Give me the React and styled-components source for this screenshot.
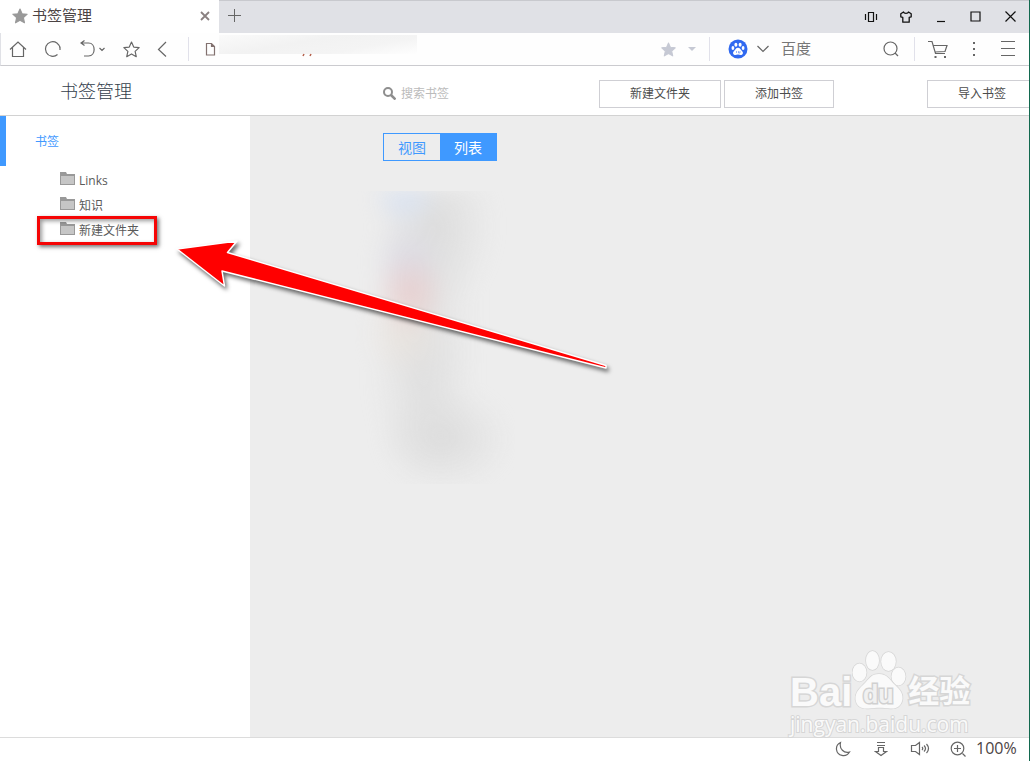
import React from 'react';
import styled, { createGlobalStyle, css } from 'styled-components';

const GlobalStyle = createGlobalStyle`
    * {
        box-sizing: border-box;
    }
    body {
        margin: 0;
        font-family: 'Open Sans', 'Noto Sans CJK SC', sans-serif;
        font-size: 12px;
        color: #555;
        background: #fff;
    }
    button, input {
        font-family: inherit;
        font-size: inherit;
        color: inherit;
    }
    svg {
        display: block;
        flex: none;
    }
`;

const Browser = styled.div`
    display: flex;
    flex-direction: column;
    height: 100vh;
    overflow: hidden;
    position: relative;
    border-right: 1px solid #12694f;
`;

const TabBar = styled.div`
    display: flex;
    height: 33px;
    flex: none;
    background: #e0e1e6;
    box-shadow: inset 0 1px #c8c9ce;
`;

const Tab = styled.div`
    display: flex;
    align-items: center;
    width: 219px;
    padding: 0 6px 2px 12px;
    gap: 5px;
    background: #fff;
    color: #4c4444;
    font-size: 15px;
`;

const TabTitle = styled.span`
    flex: 1;
    padding-bottom: 2px;
`;

const IconButton = styled.button`
    display: flex;
    align-items: center;
    justify-content: center;
    flex: none;
    width: ${props => props.$width || 35}px;
    height: 100%;
    padding: 0;
    border: 0;
    background: none;
    color: ${props => props.$color || '#666'};
`;

const WindowControls = styled.div`
    display: flex;
    margin-left: auto;
    padding-right: 1px;
`;

const NavBar = styled.div`
    display: flex;
    align-items: center;
    flex: none;
    height: 33px;
    background: #fefefe;
    border-bottom: 1px solid #cbcbcf;
    border-left: 1px solid #e0e1e6;
`;

const Divider = styled.span`
    width: 1px;
    height: 24px;
    flex: none;
    background: #e1e1ea;
    margin-left: ${props => props.$left || 0}px;
    margin-right: ${props => props.$right || 0}px;
`;

const Address = styled.label`
    display: flex;
    flex: 1;
    align-items: center;
    height: 100%;
    min-width: 0;
    padding-left: 11px;
    color: #82716f;
    position: relative;
`;

const AddressInput = styled.input`
    flex: 1;
    min-width: 0;
    border: 0;
    outline: 0;
    background: none;
`;

const AddressMask = styled.div`
    position: absolute;
    left: 30px;
    top: 2px;
    width: 198px;
    height: 19px;
    background: linear-gradient(170deg, #fafafa, #f2f2f2 40%, #f4f4f4 70%, #fefefe);
`;

const AddressRest = styled.svg`
    position: absolute;
    left: 112px;
    top: 20px;
`;

const Engine = styled.label`
    display: flex;
    align-items: center;
    width: 98px;
    margin-left: 10px;
    padding-bottom: 2px;
`;

const EngineInput = styled.input`
    width: 100%;
    padding: 0;
    border: 0;
    outline: 0;
    background: none;
    font-size: 15px;

    &::placeholder {
        color: #777;
        opacity: 1;
    }
`;

const Header = styled.header`
    display: flex;
    align-items: center;
    flex: none;
    height: 50px;
    padding: 6px 0 0 60px;
    background: #fff;
    border-bottom: 1px solid #d2d2d2;
`;

const Title = styled.h1`
    width: 323px;
    flex: none;
    margin: 0;
    padding-bottom: 6px;
    font-size: 18px;
    line-height: 24px;
    font-weight: 300;
    color: #34404c;
`;

const Search = styled.label`
    display: flex;
    align-items: center;
    flex: none;
    gap: 5px;
    width: 216px;
`;

const SearchInput = styled.input`
    width: 160px;
    padding: 0;
    border: 0;
    outline: 0;
    background: none;
    line-height: 18px;

    &::placeholder {
        color: #bbb;
        opacity: 1;
    }
`;

const HeaderButton = styled.button`
    flex: none;
    width: ${props => props.$width || 110}px;
    height: 28px;
    margin-right: 3px;
    padding: 0 0 2px;
    border: 1px solid #cfcfd4;
    background: #fff;
    color: #4c4c4c;

    &:last-child {
        margin-left: auto;
        margin-right: -8px;
    }
`;

const Main = styled.div`
    display: flex;
    flex: 1;
    min-height: 0;
`;

const Sidebar = styled.nav`
    width: 250px;
    flex: none;
    background: #fff;
`;

const RootFolder = styled.a`
    display: flex;
    align-items: center;
    height: 50px;
    padding-left: 29px;
    border-left: 6px solid #3f99ff;
    color: #3f99ff;
    text-decoration: none;
`;

const FolderList = styled.ul`
    list-style: none;
    margin: 0;
    padding: 2px 0 0 60px;
`;

const FolderItem = styled.li`
    position: relative;
    height: 25px;
`;

const FolderLink = styled.a`
    display: flex;
    align-items: center;
    gap: 4px;
    height: 24px;
    color: #5a5a5a;
    text-decoration: none;
`;

const Highlight = styled.span`
    position: absolute;
    left: -23px;
    top: -2px;
    width: 120px;
    height: 29px;
    border: 3px solid #f50505;
    box-shadow: 2px 2px 4px rgba(0, 0, 0, 0.55), inset 2px 2px 4px rgba(0, 0, 0, 0.4);
`;

const Content = styled.main`
    position: relative;
    flex: 1;
    padding: 17px 0 0 133px;
    background: #ededed;
`;

const ViewSwitch = styled.div`
    display: flex;
    width: 114px;
    height: 28px;
    border: 1px solid #3f99ff;
`;

const ViewButton = styled.button`
    flex: 1;
    padding: 0;
    border: 0;
    font-size: 14px;
    background: none;
    color: #3f99ff;

    ${props => props.$active && css`
        background: #3f99ff;
        color: #fff;
    `}
`;

const ListFrame = styled.div`
    width: 160px;
    height: 293px;
    margin: 30px 0 0 -28px;
    overflow: hidden;
`;

const BlurredList = styled.div`
    height: 100%;
    filter: blur(8px);
    background:
        radial-gradient(ellipse 36px 40px at 50px 0px, rgba(214, 226, 246, 0.8), transparent),
        radial-gradient(ellipse 38px 42px at 55px 102px, rgba(232, 200, 200, 0.75), transparent),
        radial-gradient(ellipse 38px 40px at 52px 70px, rgba(216, 214, 228, 0.6), transparent),
        radial-gradient(ellipse 42px 45px at 48px 142px, rgba(234, 226, 218, 0.6), transparent),
        radial-gradient(ellipse 60px 85px at 80px 35px, rgba(215, 215, 215, 0.75), transparent),
        radial-gradient(ellipse 50px 110px at 74px 120px, rgba(218, 218, 218, 0.45), transparent),
        radial-gradient(ellipse 52px 95px at 68px 190px, rgba(216, 216, 216, 0.6), transparent),
        radial-gradient(ellipse 66px 52px at 90px 248px, rgba(214, 214, 214, 0.7), transparent);
`;

const Watermark = styled.div`
    position: absolute;
    right: 55px;
    bottom: -1px;
    width: 184px;
    color: #fafafa;
    -webkit-text-stroke: 3px #d6d6d6;
    paint-order: stroke fill;
`;

const WatermarkLogo = styled.div`
    display: flex;
    align-items: flex-end;
    height: 61px;
`;

const LogoText = styled.span`
    font: 700 ${props => props.$size}px/38px 'Liberation Sans', 'Noto Sans CJK SC', sans-serif;
`;

const WatermarkUrl = styled.div`
    font-size: 21px;
    line-height: 27px;
    -webkit-text-stroke-width: 2px;
`;

const Arrow = styled.svg`
    position: absolute;
    left: 169px;
    top: 231px;
    overflow: visible;
    pointer-events: none;
    filter: drop-shadow(2px 3px 2px rgba(0, 0, 0, 0.6));
`;

const StatusBar = styled.footer`
    display: flex;
    justify-content: flex-end;
    align-items: center;
    flex: none;
    height: 24px;
    padding: 0 12px 1px 0;
    background: #fff;
    border-top: 1px solid #dcdcdc;
`;

const Zoom = styled.span`
    width: 41px;
    padding-bottom: 2px;
    font-size: 16px;
    line-height: 20px;
    color: #4c4444;
`;

const Icon = ({ w = 20, h = 20, children }) => (
    <svg width={w} height={h} viewBox={`0 0 ${w} ${h}`} fill="none" stroke="currentColor" strokeWidth="1.2" aria-hidden="true">
        {children}
    </svg>
);

const Star = ({ size, solid }) => (
    <svg width={size} height={size} viewBox="0 0 16 16" fill={solid ? 'currentColor' : 'none'} stroke="currentColor" strokeWidth="1.1" strokeLinejoin="round" aria-hidden="true">
        <path d="M8 1l2.100 4.700 5.100.5-3.800 3.500 1.100 5.100L8 12.200l-4.500 2.600 1.100-5.100L.8 6.200l5.100-.5z"/>
    </svg>
);

const FolderIcon = () => (
    <svg width="15" height="16" viewBox="0 0 15 16" aria-hidden="true">
        <path d="M0 0h6l1 2h8v11H0z" fill="#999"/>
        <path d="M1 4h13v8H1z" fill="#c6c6c6"/>
    </svg>
);

const folders = [
    { name: 'Links' },
    { name: '知识' },
    { name: '新建文件夹', highlighted: true },
];

const Tabs = () => (
    <TabBar>
        <Tab>
            <IconButton as="span" $width={15} $color="#999"><Star size={16} solid/></IconButton>
            <TabTitle>书签管理</TabTitle>
            <IconButton $width={16} $color="#8a8080" aria-label="关闭标签页">
                <svg width="10" height="10" viewBox="0 0 10 10" stroke="currentColor" strokeWidth="1.8"><path d="M1 1l8 8M9 1L1 9"/></svg>
            </IconButton>
        </Tab>
        <IconButton $width={31} aria-label="新标签页">
            <Icon w={15} h={15}><path d="M1 6.500h13M7.500 0v13" strokeWidth="1"/></Icon>
        </IconButton>
        <WindowControls>
            <IconButton $color="#111" aria-label="侧边栏">
                <Icon w={14} h={12}><path d="M1.500 3v6M12.500 3v6M4.500 1.500h5v9h-5z"/></Icon>
            </IconButton>
            <IconButton $color="#111" aria-label="皮肤">
                <Icon w={12} h={12}><path d="M3.500 1L.8 2.800v3l2 .6v4.800h6.400V6.400l2-.6v-3L8.500 1C8 2.800 4 2.800 3.500 1z" strokeWidth="1.300" strokeLinejoin="round"/></Icon>
            </IconButton>
            <IconButton $color="#111" aria-label="最小化">
                <Icon w={10} h={12}><path d="M1 10.500h8"/></Icon>
            </IconButton>
            <IconButton $color="#111" aria-label="最大化">
                <Icon w={11} h={11}><path d="M1 1h9v9H1z"/></Icon>
            </IconButton>
            <IconButton $color="#111" aria-label="关闭">
                <Icon w={11} h={11}><path d="M.5.5l10 10M10.500.5l-10 10"/></Icon>
            </IconButton>
        </WindowControls>
    </TabBar>
);

const Navigation = () => (
    <NavBar>
        <IconButton $width={34} aria-label="主页">
            <Icon><path d="M2 10.500l8-7.500 8 7.500M4.500 8.500v9h11v-9"/></Icon>
        </IconButton>
        <IconButton aria-label="刷新">
            <Icon><path d="M14.500 15.500A7.300 7.300 0 1 1 17 9.500M17 7.500v3.500"/></Icon>
        </IconButton>
        <IconButton $width={45} aria-label="撤销">
            <Icon w={26}><path d="M4.500 1.500L1 4l3.500 2.500M1 4h7.500c7.500 0 7.500 13 0 13H4M19.500 9l2.500 2.500L24.500 9"/></Icon>
        </IconButton>
        <IconButton $width={32} aria-label="收藏"><Star size={17}/></IconButton>
        <IconButton $width={32} aria-label="后退">
            <Icon><path d="M13 3L5.500 10.500 13 17.500"/></Icon>
        </IconButton>
        <Divider $left={9}/>
        <Address>
            <Icon><path d="M6.500 4.500h5l3 3v8.500h-8zM11.500 4.500v3h3"/></Icon>
            <AddressInput aria-label="地址"/>
            <AddressMask/>
            <AddressRest width="12" height="4" viewBox="0 0 12 4" stroke="#b5604a" strokeWidth="1.500"><path d="M2 3l1-2M9 3l1-2"/></AddressRest>
        </Address>
        <IconButton $width={24} $color="#c6c9d4" aria-label="添加到收藏"><Star size={15} solid/></IconButton>
        <IconButton $width={24} $color="#c6c9d4" aria-label="更多收藏">
            <Icon w={8} h={4}><path d="M0 0h8L4 4z" fill="currentColor" stroke="none"/></Icon>
        </IconButton>
        <Divider $left={5} $right={11}/>
        <IconButton $width={34} aria-label="搜索引擎">
            <svg width="20" height="20" viewBox="0 0 20 20" aria-hidden="true">
                <circle cx="10" cy="10" r="9.500" fill="#3069f0"/>
                <g fill="#fff">
                    <ellipse cx="4.900" cy="9" rx="1.400" ry="1.900"/>
                    <ellipse cx="7.900" cy="5.800" rx="1.500" ry="2"/>
                    <ellipse cx="12.100" cy="5.800" rx="1.500" ry="2"/>
                    <ellipse cx="15.100" cy="9" rx="1.400" ry="1.900"/>
                    <path d="M10 8.800c2.200 0 2.600 2 4 3.100 1.700 1.600 1 4-1.300 4-1 0-1.700-.3-2.700-.3s-1.700.3-2.700.3c-2.300 0-3-2.400-1.300-4C7.400 10.800 7.800 8.800 10 8.800z"/>
                </g>
                <path d="M8.500 12v2M10.500 12v2h1.500v-2" fill="none" stroke="#3069f0" strokeWidth=".5"/>
            </svg>
        </IconButton>
        <IconButton $width={16} aria-label="切换搜索引擎">
            <Icon w={14}><path d="M1.500 7L7 12.500 12.500 7"/></Icon>
        </IconButton>
        <Engine><EngineInput placeholder="百度" aria-label="百度搜索"/></Engine>
        <IconButton $width={24} aria-label="搜索">
            <Icon><circle cx="9.500" cy="9.500" r="6.500"/><path d="M14 14l3 3"/></Icon>
        </IconButton>
        <Divider $left={11}/>
        <IconButton $width={46} aria-label="购物车">
            <Icon w={22}>
                <path d="M1 2.500h4l3.500 12H18M6.500 6.500h13.500L18 12.500 8 13"/>
                <path d="M7.500 17h2v2h-2zM17 17h2v2h-2z" fill="currentColor" stroke="none"/>
            </Icon>
        </IconButton>
        <IconButton $width={26} aria-label="更多">
            <Icon w={4} h={16}><path d="M1 1h2v2H1zM1 7h2v2H1zM1 13h2v2H1z" fill="currentColor" stroke="none"/></Icon>
        </IconButton>
        <IconButton $width={42} aria-label="菜单">
            <Icon w={14} h={16}><path d="M0 .5h14M0 7.500h14M0 14.500h14" strokeWidth="1"/></Icon>
        </IconButton>
    </NavBar>
);

const Paw = () => (
    <svg width="56" height="61" viewBox="0 0 56 61" aria-hidden="true">
        <g fill="#fafafa" stroke="#d6d6d6" strokeWidth="1.500">
            <ellipse cx="7.500" cy="22.500" rx="7" ry="9"/>
            <ellipse cx="20.500" cy="10.500" rx="6.500" ry="9.500"/>
            <ellipse cx="36.500" cy="11.500" rx="7.300" ry="9.500"/>
            <ellipse cx="46.500" cy="26.500" rx="7" ry="9"/>
            <path d="M27 24c8 0 11 6 15 10 5 5 9 8 8.500 15-1 7-6 10-12 9.500-8-1-14-1-22 0-7 .5-12-2-13-9C3 42 8 38 12 34c5-5 7-10 15-10z"/>
        </g>
        <text x="11" y="53" fontFamily="Liberation Sans, sans-serif" fontWeight="700" fontSize="25" fill="#f1f1f1" stroke="#d0d0d0" strokeWidth="3">du</text>
    </svg>
);

const App = () => (
    <Browser>
        <GlobalStyle/>
        <Tabs/>
        <Navigation/>
        <Header>
            <Title>书签管理</Title>
            <Search>
                <svg width="13" height="13" viewBox="0 0 13 13" fill="none" stroke="#8e8e8e" strokeWidth="2" aria-hidden="true">
                    <circle cx="5" cy="5" r="4"/><path d="M8 8l4.500 4.500" strokeWidth="2.500"/>
                </svg>
                <SearchInput placeholder="搜索书签" aria-label="搜索书签"/>
            </Search>
            <HeaderButton $width={122}>新建文件夹</HeaderButton>
            <HeaderButton>添加书签</HeaderButton>
            <HeaderButton>导入书签</HeaderButton>
        </Header>
        <Main>
            <Sidebar>
                <RootFolder href="#root-folder">书签</RootFolder>
                <FolderList>
                    {folders.map(folder => (
                        <FolderItem key={folder.name}>
                            <FolderLink href="#folder"><FolderIcon/>{folder.name}</FolderLink>
                            {folder.highlighted && <Highlight/>}
                        </FolderItem>
                    ))}
                </FolderList>
            </Sidebar>
            <Content>
                <ViewSwitch>
                    <ViewButton>视图</ViewButton>
                    <ViewButton $active>列表</ViewButton>
                </ViewSwitch>
                <ListFrame>
                    <BlurredList/>
                </ListFrame>
                <Watermark>
                    <WatermarkLogo>
                        <LogoText $size={40}>Bai</LogoText>
                        <Paw/>
                        <LogoText $size={31}>经验</LogoText>
                    </WatermarkLogo>
                    <WatermarkUrl>jingyan.baidu.com</WatermarkUrl>
                </Watermark>
            </Content>
        </Main>
        <StatusBar>
            <IconButton $width={38} aria-label="夜间模式">
                <Icon w={16} h={16}><path d="M5.500 1.500C2.500 3 1.200 5.500 1.500 8.500c.8 6.500 9.500 8.500 13 2.500C9 12.500 4 8 5.500 1.500z"/></Icon>
            </IconButton>
            <IconButton $width={38} aria-label="下载">
                <Icon w={14} h={16}><path d="M3 1.500h8M3 4.500h8M4.500 6.500h5v4h3L7 14.500 1.500 10.500h3z"/></Icon>
            </IconButton>
            <IconButton $width={40} aria-label="声音">
                <Icon w={20} h={16}><path d="M1.500 4.500h4l4-3v12l-4-3h-4zM12 6q1.500 1.500 0 3M14 4.500q3 3 0 6M16.500 3q4 4.500 0 9"/></Icon>
            </IconButton>
            <IconButton $width={36} aria-label="缩放">
                <Icon w={16} h={16}><circle cx="7.500" cy="7.500" r="6.300"/><path d="M4 7.500h7M7.500 4v7M12.500 12.500l3 3"/></Icon>
            </IconButton>
            <Zoom>100%</Zoom>
        </StatusBar>
        <Arrow width="440" height="145" viewBox="170 232 440 145" aria-hidden="true">
            <path d="M178 250l60-8-9.500 11.500L607 366.500v2.500L223 272l2.500 15z" fill="#f00" stroke="#fff" strokeWidth="1.500" strokeLinejoin="round"/>
        </Arrow>
    </Browser>
);

export default App;
